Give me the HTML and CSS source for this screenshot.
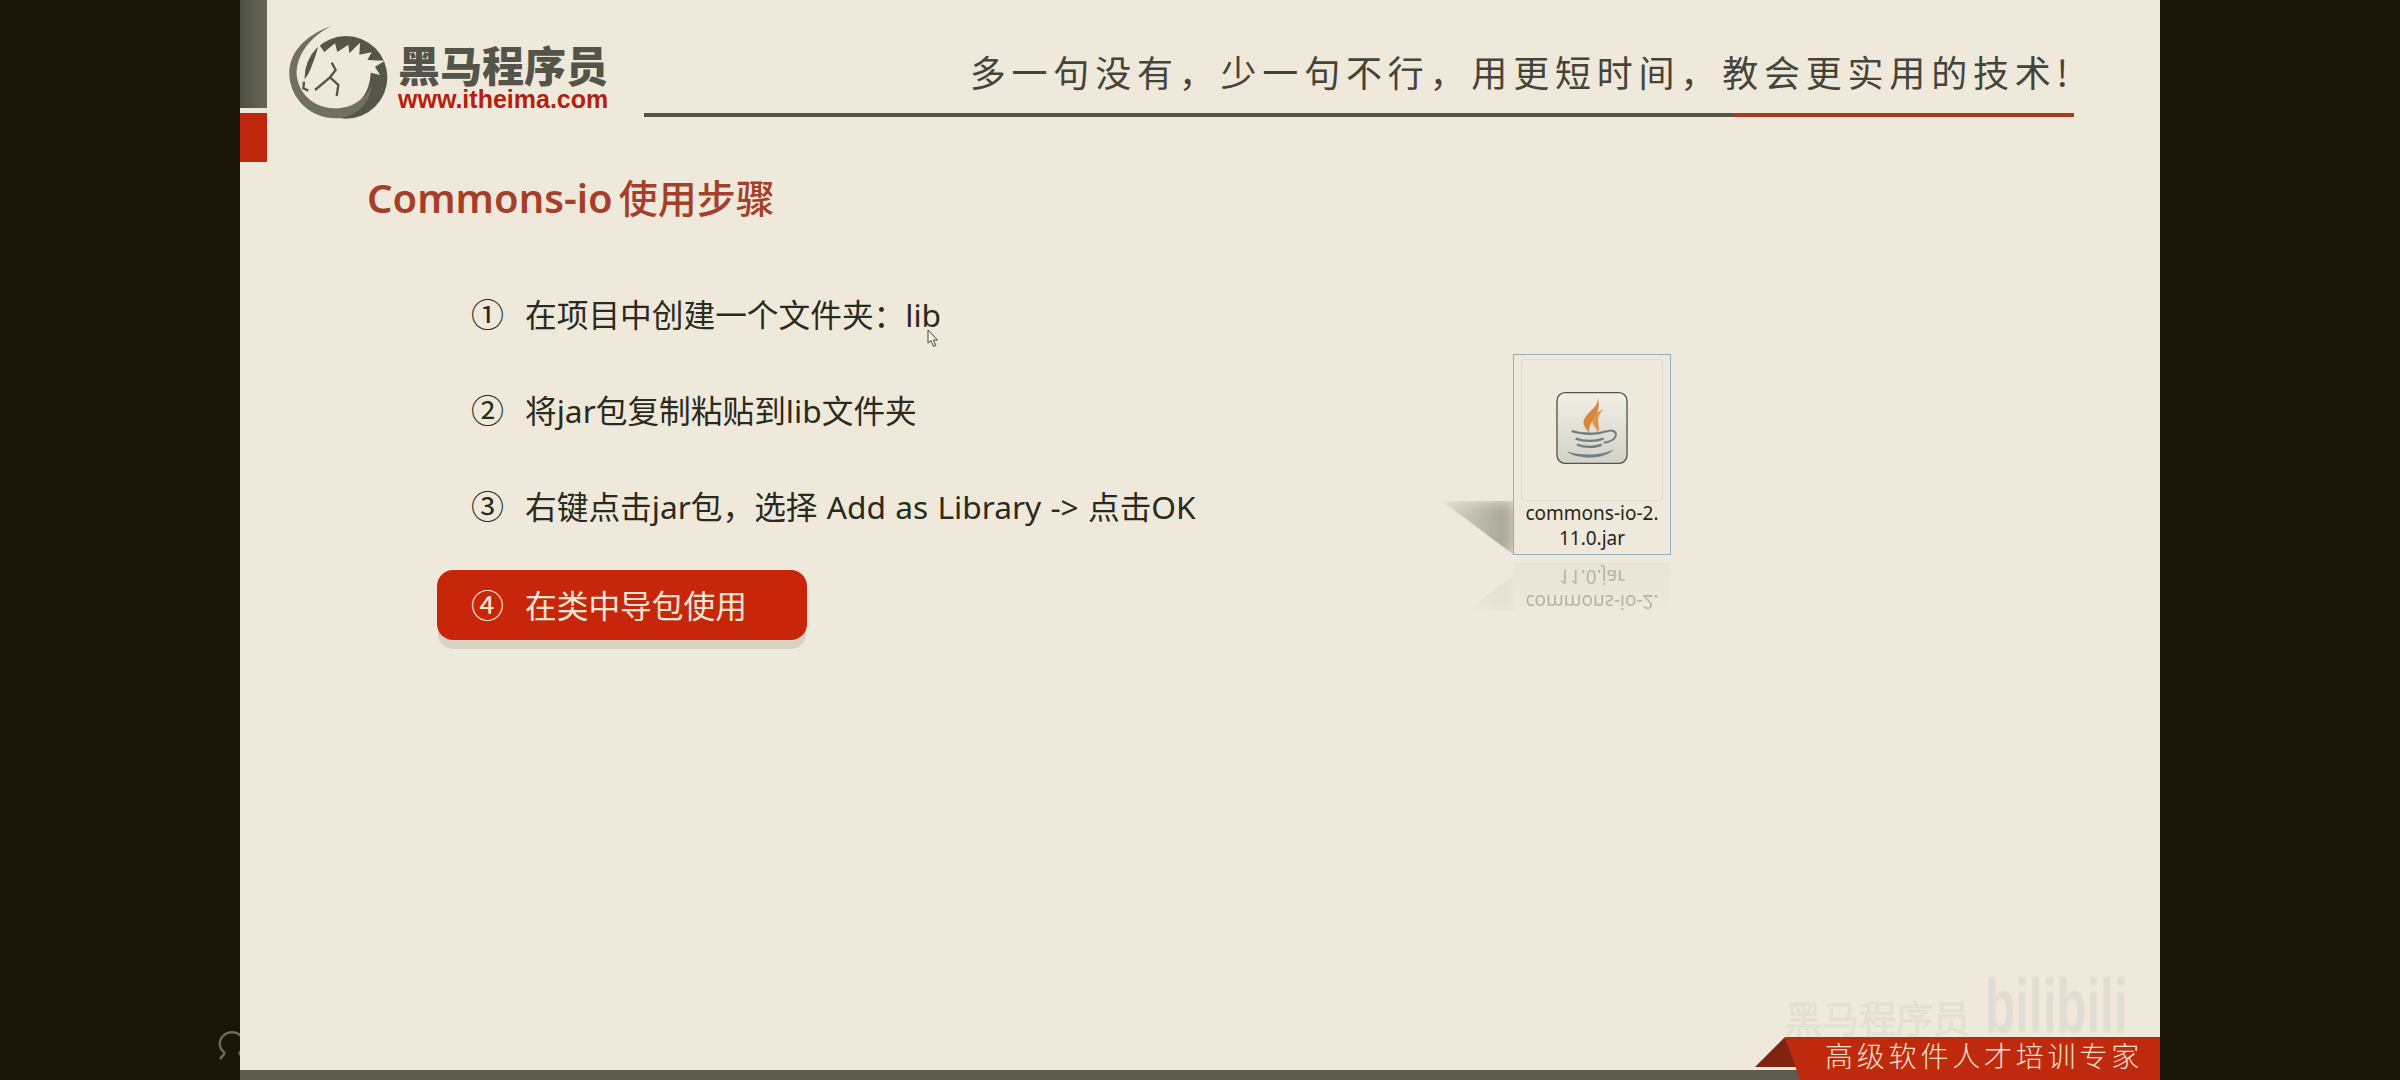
FILE: index.html
```html
<!DOCTYPE html>
<html lang="zh-CN">
<head>
    <meta charset="UTF-8">
    <title>Commons-io使用步骤</title>
    <link rel="stylesheet" href="styles.css">
</head>
<body>
    <!-- player icon, half hidden behind the slide -->
    <svg class="player-icon" viewBox="0 0 30 32" width="30" height="32">
        <path d="M7 23C1 19 0 11 5 6C10 1 18 1 23 6C28 11 27 19 21 23M7 23L2 29M21 23L26 29" fill="none" stroke="#6c6a5b" stroke-width="2.4"/>
    </svg>

    <div class="slide">
        <!-- Header -->
        <div class="header">
            <div class="side-tab">
                <div class="side-tab-gray"></div>
                <div class="side-tab-red"></div>
            </div>
            <svg class="logo" viewBox="0 0 348 312" width="116" height="104">
                <circle cx="198" cy="172" r="124" fill="#56554a"/>
                <path d="M116 72L133 96L165 70L172 96L205 74L208 100L240 68L238 104L275 97L262 120L315 122L285 140L300 165L272 158C270 215 240 265 170 272C120 272 85 240 72 212L66 190C76 175 88 160 96 135C104 115 112 95 116 72Z" fill="#eee9da"/>
                <path d="M155 18C75 45 25 100 28 165C32 240 95 296 170 295C230 292 272 250 276 190C262 235 215 268 160 265C95 262 55 215 50 165C48 105 90 50 155 18Z" fill="#706f64"/>
                <path d="M155 128L167 150L150 172L105 210M150 172L175 195L170 228M72 185L70 205L85 212" fill="none" stroke="#56554a" stroke-width="7"/>
            </svg>
            <div class="brand">
                <div class="brand-name">黑马程序员</div>
                <div class="brand-url">www.itheima.com</div>
            </div>
            <div class="slogan">
                <div class="slogan-text">多一句没有，少一句不行，用更短时间，教会更实用的技术!</div>
                <div class="slogan-line">
                    <div class="slogan-line-gray"></div>
                    <div class="slogan-line-red"></div>
                </div>
            </div>
        </div>

        <!-- Content -->
        <h1 class="title">Commons-io<span class="title-cn">使用步骤</span></h1>
        <div class="content">
            <div class="steps">
                <div class="step">
                    <span class="step-num">①</span>
                    <span>在项目中创建一个文件夹：lib</span>
                    <svg class="cursor" viewBox="0 0 12 19" width="12" height="19">
                        <path d="M1 1L1 14L4 11.5L6.5 17.5L8.8 16.5L6.4 11L10.5 11Z" fill="#f6f3ea" stroke="#44443a" stroke-width="1"/>
                    </svg>
                </div>
                <div class="step">
                    <span class="step-num">②</span>
                    <span>将jar包复制粘贴到lib文件夹</span>
                </div>
                <div class="step">
                    <span class="step-num">③</span>
                    <span>右键点击jar包，选择 Add as Library -&gt; 点击OK</span>
                </div>
                <div class="step step-active">
                    <span class="step-num">④</span>
                    <span>在类中导包使用</span>
                </div>
            </div>

            <div class="file-card">
                <div class="file-shadow"></div>
                <div class="file-shadow-low"></div>
                <div class="file-thumb">
                    <svg class="java-icon" viewBox="32 20 214 216" width="72" height="72">
                        <defs>
                            <linearGradient id="tile" x1="0" y1="0" x2="0" y2="1">
                                <stop offset="0" stop-color="#f1efe6"/>
                                <stop offset="1" stop-color="#d3d2c8"/>
                            </linearGradient>
                        </defs>
                        <rect x="34" y="22" width="210" height="212" rx="24" fill="url(#tile)" stroke="#50564f" stroke-width="4"/>
                        <path d="M155 36C165 70 105 85 115 120C119 130 126 138 132 144C120 110 175 90 155 36Z" fill="#d9853b"/>
                        <path d="M174 70C140 88 132 105 148 125C154 133 156 138 154 146C172 125 140 105 174 70Z" fill="#e0934a"/>
                        <path d="M78 137C110 148 155 148 182 137M90 160C115 169 150 169 174 160M94 178C118 187 150 187 168 178" fill="none" stroke="#6f7f84" stroke-width="7"/>
                        <path d="M180 140C197 130 214 138 210 152C206 164 190 170 174 172" fill="none" stroke="#6f7f84" stroke-width="6"/>
                        <path d="M64 198C100 212 170 212 204 192C180 224 90 224 64 198Z" fill="#6f7f84"/>
                    </svg>
                </div>
                <div class="file-name">commons-io-2.<br>11.0.jar</div>
                <div class="file-reflect">
                    <div class="file-name">commons-io-2.<br>11.0.jar</div>
                </div>
            </div>
        </div>

        <!-- Footer -->
        <div class="footer">
            <div class="watermark-name">黑马程序员</div>
            <div class="watermark-site">bilibili</div>
            <div class="footer-fold"></div>
            <div class="footer-banner">高级软件人才培训专家</div>
        </div>
    </div>
</body>
</html>
```
FILE: styles.css
```css
body {
    position: relative;
    height: 1080px;
    margin: 0;
    padding: 0 240px;
    overflow: hidden;
    background-color: #1a1509;
    font-family: "Noto Sans", "Noto Sans CJK SC", sans-serif;
}
.player-icon {
    position: absolute;
    left: 218px;
    top: 1030px;
}
.slide {
    position: relative;
    display: flex;
    flex-direction: column;
    width: 1920px;
    height: 1080px;
    background-color: #eee9da;
}

/* Header */
.header {
    display: flex;
    height: 162px;
}
.side-tab {
    width: 27px;
    flex-shrink: 0;
}
.side-tab-gray {
    height: 108px;
    background: linear-gradient(90deg, #4f5044, #66665a);
}
.side-tab-red {
    height: 49px;
    margin-top: 5px;
    background-color: #c0260b;
}
.logo {
    margin: 20px 2px 0 13px;
}
.brand {
    width: 246px;
    padding-top: 41px;
}
.brand-name {
    font-family: "Noto Sans CJK SC", sans-serif;
    font-size: 42px;
    font-weight: 900;
    line-height: 46px;
    color: #55544a;
}
.brand-url {
    font-family: "Liberation Sans", sans-serif;
    font-size: 25px;
    font-weight: 700;
    line-height: 24px;
    color: #b3200f;
}
.slogan {
    flex: 1;
    margin-right: 86px;
    padding-top: 47px;
    text-align: right;
}
.slogan-text {
    font-family: "Noto Sans CJK SC", sans-serif;
    font-size: 36px;
    font-weight: 400;
    line-height: 49px;
    letter-spacing: 5.8px;
    white-space: nowrap;
    color: #45443a;
}
.slogan-line {
    display: flex;
    height: 4px;
    margin-top: 17px;
}
.slogan-line-gray {
    flex: 1;
    background-color: #56554a;
}
.slogan-line-red {
    width: 341px;
    background-color: #a83a22;
}

/* Content */
.title {
    margin: 10px 0 0 127px;
    font-size: 40px;
    font-weight: 600;
    line-height: 52px;
    color: #a63f2a;
}
.title-cn {
    margin-left: 6px;
    font-size: 39px;
    font-weight: 500;
}
.content {
    display: flex;
    flex: 1;
    align-items: flex-start;
    padding: 54px 0 0 197px;
}
.steps {
    display: flex;
    flex-direction: column;
    gap: 26px;
    width: 1076px;
}
.step {
    position: relative;
    display: flex;
    align-items: center;
    width: 370px;
    height: 70px;
    padding-left: 34px;
    box-sizing: border-box;
    font-size: 31.7px;
    word-spacing: 1px;
    white-space: nowrap;
    color: #2b2a20;
}
.step-num {
    width: 54px;
    flex-shrink: 0;
    font-family: "Noto Sans CJK SC", sans-serif;
    font-size: 33px;
    font-weight: 400;
}
.step-active {
    margin-top: 4px;
    padding-bottom: 3px;
    border-radius: 16px;
    background-color: #c8260a;
    box-shadow: 0 10px 0 -1px #d6d3c5;
    color: #fbe6d6;
}
.cursor {
    position: absolute;
    left: 490px;
    top: 51px;
}
.file-card {
    position: relative;
    width: 158px;
    height: 201px;
    margin-top: 76px;
    padding: 4px 7px 0;
    box-sizing: border-box;
    border: 1.5px solid #8fb3c0;
    text-align: center;
}
.file-thumb {
    display: flex;
    align-items: center;
    justify-content: center;
    height: 142px;
    padding-bottom: 5px;
    box-sizing: border-box;
    border: 1px solid #dedbcc;
    border-radius: 3px;
}
.file-name {
    margin: 0 -5px;
    font-size: 19px;
    line-height: 25px;
    color: #25241c;
}
.file-shadow {
    position: absolute;
    left: -72px;
    top: 146px;
    width: 72px;
    height: 54px;
    background: linear-gradient(90deg, #dcd9ca, #a09f90);
    clip-path: polygon(0 0, 100% 0, 100% 100%);
    filter: blur(7px);
}
.file-shadow-low {
    position: absolute;
    left: -48px;
    top: 220px;
    width: 48px;
    height: 36px;
    background: linear-gradient(90deg, #eee9da, #e2dfd0);
    clip-path: polygon(0 100%, 100% 0, 100% 100%);
    filter: blur(7px);
}
.file-reflect {
    position: absolute;
    left: 0;
    right: 0;
    top: 208px;
    height: 52px;
    border-top: 1px solid #e4e1d3;
    background: linear-gradient(180deg, #e9e5d6, #eee9da);
}
.file-reflect .file-name {
    margin: 0;
    transform: scaleY(-1);
    color: #b5b3a7;
}

/* Footer */
.footer {
    position: relative;
    height: 95px;
    border-bottom: 10px solid #5c5b4e;
    box-sizing: border-box;
}
.watermark-name {
    position: absolute;
    left: 1545px;
    top: 15px;
    font-family: "Noto Sans CJK SC", sans-serif;
    font-size: 37px;
    font-weight: 300;
    line-height: 34px;
    color: transparent;
    -webkit-text-stroke: 1px #dfdccf;
}
.watermark-site {
    position: absolute;
    left: 1745px;
    top: -8px;
    font-family: "Liberation Sans", sans-serif;
    font-size: 76px;
    font-weight: 700;
    line-height: 58px;
    color: #e0ddd2;
    transform: scaleX(0.65);
    transform-origin: left;
    filter: blur(1px);
}
.footer-fold {
    position: absolute;
    left: 1515px;
    top: 52px;
    width: 42px;
    height: 30px;
    background-color: #7e2410;
    clip-path: polygon(30px 0, 100% 100%, 0 100%);
}
.footer-banner {
    position: absolute;
    left: 1545px;
    right: 0;
    top: 52px;
    height: 43px;
    padding-left: 40px;
    box-sizing: border-box;
    background-color: #bf2a0e;
    clip-path: polygon(0 0, 100% 0, 100% 100%, 15px 100%);
    font-family: "Noto Sans CJK SC", sans-serif;
    font-size: 28px;
    font-weight: 300;
    line-height: 36px;
    letter-spacing: 3.8px;
    color: #f5e3d0;
}
```
